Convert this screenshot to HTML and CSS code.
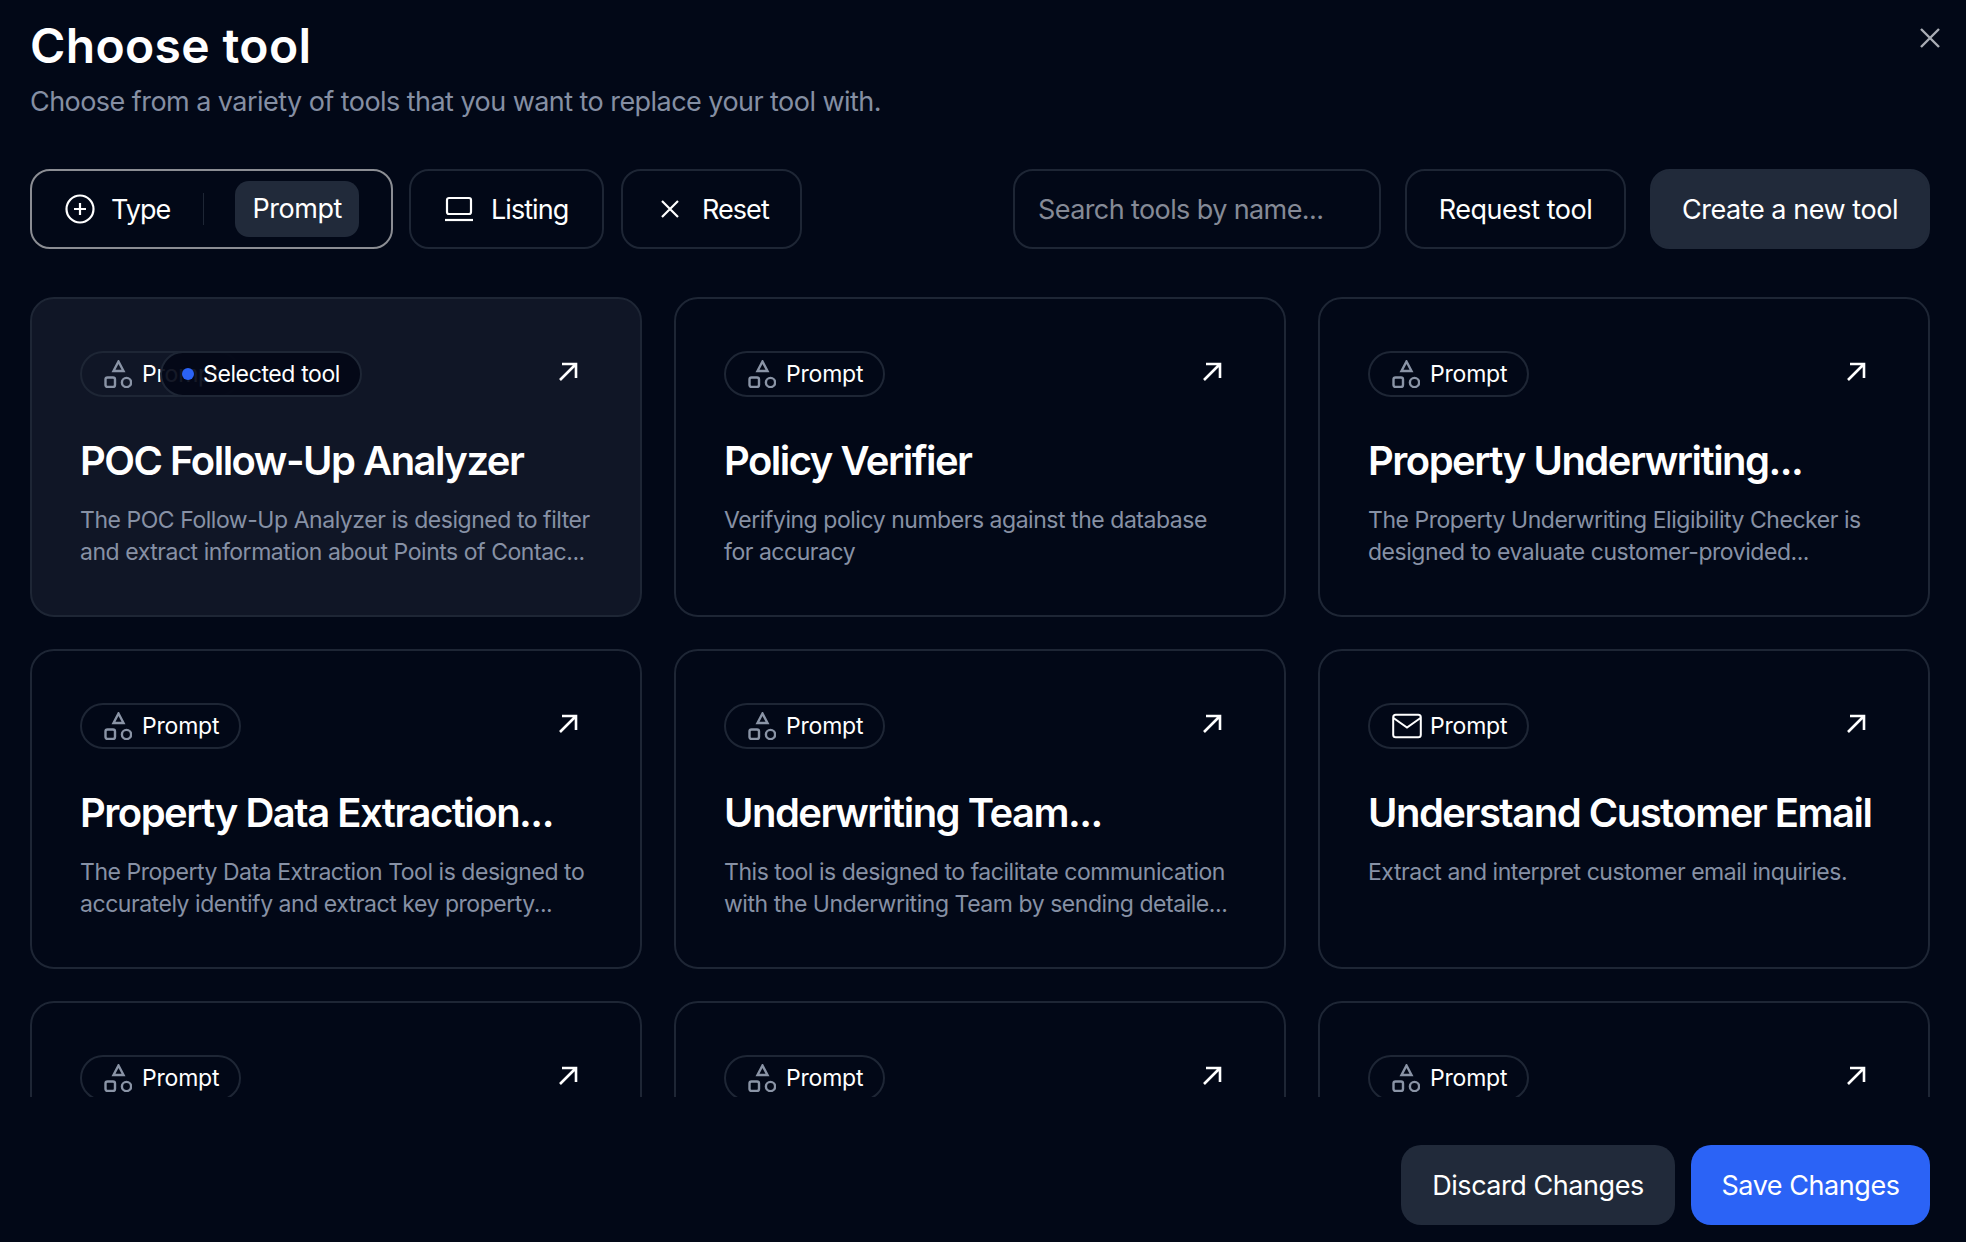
FILE: index.html
```html
<!DOCTYPE html>
<html lang="en">

<head>
    <meta charset="UTF-8">
    <title>Choose tool</title>
    <link rel="stylesheet" href="styles.css">
</head>

<body>
    <svg class="sprites" width="0" height="0">
        <symbol id="shapes" viewBox="0 0 28 28">
            <path d="M14.5 1.5 L19.5 11 H9.5 Z" />
            <rect x="1.5" y="17.5" width="9.5" height="9.5" rx="2" />
            <circle cx="22.5" cy="22.5" r="4.6" />
        </symbol>
        <symbol id="mail" viewBox="0 0 30 26">
            <rect x="1.2" y="1.7" width="27.6" height="22.6" rx="2.5" />
            <path d="M1.5 5 L15 14.5 L28.5 5" />
        </symbol>
        <symbol id="arrow" viewBox="0 0 24 24">
            <path d="M4 20 L20 4 M6 4 H20 V18" />
        </symbol>
    </svg>

    <main class="dialog">
        <button class="close" aria-label="Close">
            <svg viewBox="0 0 20 20">
                <path d="M1 1 L19 19 M19 1 L1 19" />
            </svg>
        </button>

        <header class="head">
            <h1>Choose tool</h1>
            <p>Choose from a variety of tools that you want to replace your tool with.</p>
        </header>

        <div class="toolbar">
            <div class="btn type-filter">
                <svg class="btn-icon" viewBox="0 0 30 30">
                    <circle cx="15" cy="15" r="13.5" />
                    <path d="M15 9 V21 M9 15 H21" />
                </svg>
                <span class="tight">Type</span>
                <i class="divider"></i>
                <span class="type-value">Prompt</span>
            </div>
            <div class="btn listing">
                <svg class="btn-icon" viewBox="0 0 30 26">
                    <rect x="3" y="2" width="24" height="16" rx="2" />
                    <path d="M1 24 H29" />
                </svg>
                <span class="tight">Listing</span>
            </div>
            <div class="btn reset">
                <svg class="btn-icon" viewBox="0 0 20 20">
                    <path d="M2 2 L18 18 M18 2 L2 18" />
                </svg>
                <span class="tight">Reset</span>
            </div>
            <div class="btn search">Search tools by name...</div>
            <div class="btn request">Request tool</div>
            <div class="btn create">Create a new tool</div>
        </div>

        <section class="list">
            <div class="grid">
                <article class="card selected">
                    <div class="card-top">
                        <span class="chip"><svg class="chip-icon"><use href="#shapes" /></svg>Prompt</span>
                        <svg class="open"><use href="#arrow" /></svg>
                    </div>
                    <span class="chip selected-chip"><i class="dot"></i>Selected tool</span>
                    <h2>POC Follow-Up Analyzer</h2>
                    <p>The POC Follow-Up Analyzer is designed to filter and extract information about Points of Contac...</p>
                </article>
                <article class="card">
                    <div class="card-top">
                        <span class="chip"><svg class="chip-icon"><use href="#shapes" /></svg>Prompt</span>
                        <svg class="open"><use href="#arrow" /></svg>
                    </div>
                    <h2>Policy Verifier</h2>
                    <p>Verifying policy numbers against the database<br>for accuracy</p>
                </article>
                <article class="card">
                    <div class="card-top">
                        <span class="chip"><svg class="chip-icon"><use href="#shapes" /></svg>Prompt</span>
                        <svg class="open"><use href="#arrow" /></svg>
                    </div>
                    <h2>Property Underwriting...</h2>
                    <p>The Property Underwriting Eligibility Checker is designed to evaluate customer-provided...</p>
                </article>
                <article class="card">
                    <div class="card-top">
                        <span class="chip"><svg class="chip-icon"><use href="#shapes" /></svg>Prompt</span>
                        <svg class="open"><use href="#arrow" /></svg>
                    </div>
                    <h2>Property Data Extraction...</h2>
                    <p>The Property Data Extraction Tool is designed to accurately identify and extract key property...</p>
                </article>
                <article class="card">
                    <div class="card-top">
                        <span class="chip"><svg class="chip-icon"><use href="#shapes" /></svg>Prompt</span>
                        <svg class="open"><use href="#arrow" /></svg>
                    </div>
                    <h2>Underwriting Team...</h2>
                    <p>This tool is designed to facilitate communication with the Underwriting Team by sending detaile...</p>
                </article>
                <article class="card">
                    <div class="card-top">
                        <span class="chip"><svg class="chip-icon mail-icon"><use href="#mail" /></svg>Prompt</span>
                        <svg class="open"><use href="#arrow" /></svg>
                    </div>
                    <h2>Understand Customer Email</h2>
                    <p>Extract and interpret customer email inquiries.</p>
                </article>
                <article class="card">
                    <div class="card-top">
                        <span class="chip"><svg class="chip-icon"><use href="#shapes" /></svg>Prompt</span>
                        <svg class="open"><use href="#arrow" /></svg>
                    </div>
                </article>
                <article class="card">
                    <div class="card-top">
                        <span class="chip"><svg class="chip-icon"><use href="#shapes" /></svg>Prompt</span>
                        <svg class="open"><use href="#arrow" /></svg>
                    </div>
                </article>
                <article class="card">
                    <div class="card-top">
                        <span class="chip"><svg class="chip-icon"><use href="#shapes" /></svg>Prompt</span>
                        <svg class="open"><use href="#arrow" /></svg>
                    </div>
                </article>
            </div>
        </section>

        <footer class="foot">
            <div class="foot-btn discard">Discard Changes</div>
            <div class="foot-btn save">Save Changes</div>
        </footer>
    </main>
</body>

</html>
```

FILE: styles.css
```css
* {
    box-sizing: border-box;
}

html,
body {
    height: 100%;
    margin: 0;
}

body {
    background-color: #020817;
    color: #fff;
    font-family: 'Inter', 'Liberation Sans', sans-serif;
    overflow: hidden;
}

.sprites {
    position: absolute;
}

.dialog {
    position: relative;
    height: 1242px;
    padding: 0 36px 16px 30px;
}

.close {
    position: absolute;
    top: 28px;
    right: 26px;
    width: 20px;
    height: 20px;
    padding: 0;
    background: none;
    border: 0;
}

.close svg {
    display: block;
    fill: none;
    stroke: #a9adb5;
    stroke-width: 2.4;
}

.head {
    height: 169px;
    padding-top: 17px;
}

.head h1 {
    margin: 0;
    font-size: 48px;
    line-height: 58px;
    font-weight: 600;
    letter-spacing: 0.35px;
}

.head p {
    margin: 9px 0 0;
    font-size: 27px;
    line-height: 36px;
    letter-spacing: -0.55px;
    color: #858fa3;
}

.toolbar {
    display: flex;
    height: 80px;
    font-size: 27px;
    letter-spacing: -0.45px;
}

.btn {
    display: flex;
    align-items: center;
    height: 80px;
    border: 2px solid #1e2635;
    border-radius: 20px;
    white-space: nowrap;
}

.btn-icon {
    flex: none;
    fill: none;
    stroke: #fff;
    stroke-width: 2.2;
}

.tight {
    letter-spacing: -0.95px;
}

.type-filter {
    width: 363px;
    padding: 0 0 0 33px;
    border-color: #8b8d93;
}

.type-filter .btn-icon {
    width: 30px;
    height: 30px;
    margin-right: 16px;
}

.divider {
    width: 1px;
    height: 32px;
    margin: 0 31px 0 33px;
    background: #1e2635;
}

.type-value {
    padding: 0 17px;
    height: 56px;
    line-height: 56px;
    background: #212a3a;
    border-radius: 14px;
}

.listing {
    width: 195px;
    margin-left: 16px;
    padding-left: 33px;
}

.listing .btn-icon {
    width: 30px;
    height: 26px;
    margin-right: 17px;
}

.reset {
    width: 181px;
    margin-left: 17px;
    padding-left: 37px;
}

.reset .btn-icon {
    width: 20px;
    height: 20px;
    margin-right: 22px;
}

.search {
    width: 368px;
    margin-left: auto;
    padding-left: 23px;
    letter-spacing: -0.6px;
    color: #858a96;
}

.request {
    width: 221px;
    margin-left: 24px;
    justify-content: center;
}

.create {
    width: 280px;
    margin-left: 24px;
    justify-content: center;
    background: #212a3a;
    border-color: #212a3a;
}

.list {
    height: 800px;
    margin-top: 48px;
    overflow: hidden;
}

.grid {
    display: grid;
    grid-template-columns: repeat(3, 612px);
    grid-auto-rows: 320px;
    gap: 32px;
}

.card {
    position: relative;
    padding: 52px 48px 0;
    border: 2px solid #1e2635;
    border-radius: 24px;
}

.card.selected {
    background: #101626;
}

.card-top {
    display: flex;
    justify-content: space-between;
    align-items: center;
}

.chip {
    display: inline-flex;
    align-items: center;
    height: 46px;
    padding: 0 20px 0 22px;
    border: 2px solid #1e2635;
    border-radius: 23px;
    font-size: 23px;
    letter-spacing: -0.2px;
    white-space: nowrap;
}

.chip-icon {
    width: 28px;
    height: 28px;
    margin-right: 10px;
    fill: none;
    stroke: #8a94a6;
    stroke-width: 2.4;
}

.mail-icon {
    width: 30px;
    height: 26px;
    margin-right: 8px;
    stroke: #fff;
    stroke-width: 2;
}

.selected-chip {
    position: absolute;
    top: 52px;
    left: 128px;
    background: rgba(3, 8, 23, 0.93);
    padding: 0 20px;
    letter-spacing: -0.38px;
}

.dot {
    width: 12px;
    height: 12px;
    margin-right: 9px;
    border-radius: 50%;
    background: #2b63f6;
}

.open {
    width: 24px;
    height: 24px;
    margin: 0 12px 4px 0;
    fill: none;
    stroke: #fff;
    stroke-width: 2.6;
}

.card h2 {
    margin: 39px 0 0;
    font-size: 40px;
    line-height: 50px;
    font-weight: 600;
    letter-spacing: -1.5px;
}

.card p {
    margin: 18px 0 0;
    font-size: 23px;
    line-height: 32px;
    letter-spacing: -0.46px;
    color: #8791a5;
}

.foot {
    display: flex;
    justify-content: flex-end;
    gap: 16px;
    margin-top: 48px;
}

.foot-btn {
    display: flex;
    align-items: center;
    justify-content: center;
    height: 80px;
    border-radius: 20px;
    font-size: 27px;
    letter-spacing: -0.45px;
}

.discard {
    width: 274px;
    background: #212a3a;
}

.save {
    width: 239px;
    background: #2b63f6;
}
```
